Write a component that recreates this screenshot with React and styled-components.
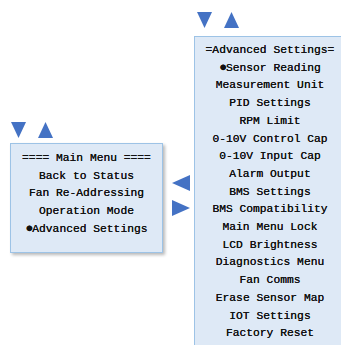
import React from 'react'
import styled, { createGlobalStyle } from 'styled-components'

const Global = createGlobalStyle`
  html, body {
    margin: 0;
    padding: 0;
    background: #ffffff;
    overflow: hidden;
  }
`

const Page = styled.div`
  display: flex;
  align-items: flex-start;
  width: 341px;
  height: 345px;
  overflow: hidden;
  font-family: "Liberation Mono", "DejaVu Sans Mono", monospace;
`

const Group = styled.div`
  display: flex;
  flex-direction: column;
  flex-shrink: 0;
  margin-top: ${p => p.top}px;
  margin-left: ${p => p.left}px;
`

const Arrows = styled.div`
  display: flex;
  gap: 12px;
  padding-left: ${p => p.inset}px;
  margin-bottom: ${p => p.below}px;
`

const Side = styled.div`
  display: flex;
  flex-direction: column;
  gap: 9px;
  margin-top: 175px;
  margin-left: 9px;
  flex-shrink: 0;
`

const Menu = styled.div`
  width: ${p => p.width}px;
  box-sizing: border-box;
  background: #dee9f6;
  border: 1px solid #9dc3e6;
  box-shadow: ${p => (p.shadow ? '2px 2px 3px rgba(0, 0, 0, 0.28)' : 'none')};
  padding: ${p => p.pad};
  color: #111111;
  font-size: 11.3px;
  line-height: 17.7px;
  text-align: center;
  white-space: pre;
  text-shadow: 0 0 0.4px #111111;
`

const Line = styled.div``

const Bullet = styled.span`
  display: inline-block;
  width: 6.8px;
  font-size: 13px;
  line-height: 1;
`

const Tri = ({ dir }) => {
  const pts = {
    down: '0,0 15,0 7.5,16',
    up: '7.5,0 15,16 0,16',
    left: '0,8 18,0 18,16',
    right: '0,0 18,8 0,16',
  }[dir]
  const w = dir === 'left' || dir === 'right' ? 18 : 15
  return (
    <svg width={w} height="16" viewBox={`0 0 ${w} 16`} style={{ display: 'block' }}>
      <polygon points={pts} fill="#4472c4" />
    </svg>
  )
}

const mainItems = [
  { text: '==== Main Menu ====' },
  { text: 'Back to Status' },
  { text: 'Fan Re-Addressing' },
  { text: 'Operation Mode' },
  { text: 'Advanced Settings', on: true },
]

const advItems = [
  { text: '=Advanced Settings=' },
  { text: 'Sensor Reading', on: true },
  { text: 'Measurement Unit' },
  { text: 'PID Settings' },
  { text: 'RPM Limit' },
  { text: '0-10V Control Cap' },
  { text: '0-10V Input Cap' },
  { text: 'Alarm Output' },
  { text: 'BMS Settings' },
  { text: 'BMS Compatibility' },
  { text: 'Main Menu Lock' },
  { text: 'LCD Brightness' },
  { text: 'Diagnostics Menu' },
  { text: 'Fan Comms' },
  { text: 'Erase Sensor Map' },
  { text: 'IOT Settings' },
  { text: 'Factory Reset' },
]

const Items = ({ list }) =>
  list.map(i => (
    <Line key={i.text}>
      {i.on && <Bullet>●</Bullet>}
      {i.text}
    </Line>
  ))

export default function App() {
  return (
    <>
      <Global />
      <Page>
        <Group top={122} left={10}>
          <Arrows inset={1} below={5}>
            <Tri dir="down" />
            <Tri dir="up" />
          </Arrows>
          <Menu width={153} pad="6px 0 13px" shadow>
            <Items list={mainItems} />
          </Menu>
        </Group>
        <Side>
          <Tri dir="left" />
          <Tri dir="right" />
        </Side>
        <Group top={12} left={4}>
          <Arrows inset={3} below={8}>
            <Tri dir="down" />
            <Tri dir="up" />
          </Arrows>
          <Menu width={152} pad="5px 0 20px">
            <Items list={advItems} />
          </Menu>
        </Group>
      </Page>
    </>
  )
}
